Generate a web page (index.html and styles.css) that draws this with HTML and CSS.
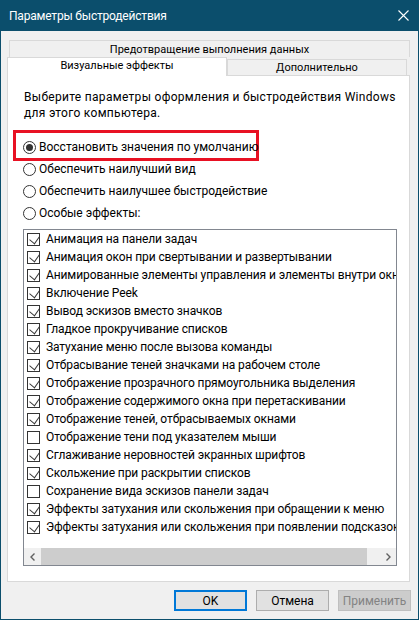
FILE: index.html
```
<!DOCTYPE html>
<html lang="ru">
<head>
  <meta charset="UTF-8">
  <title>Параметры быстродействия</title>
  <link rel="stylesheet" href="styles.css">
</head>
<body>

  <div class="window">
    <!-- Title bar -->
    <div class="titlebar">
      <span class="title">Параметры быстродействия</span>
      <svg class="close" width="11" height="11" viewBox="0 0 11 11">
        <path d="M0.5 0.5 L10.5 10.5 M10.5 0.5 L0.5 10.5" stroke="#fff" stroke-width="1.1" fill="none"/>
      </svg>
    </div>

    <div class="body">
      <!-- Tabs -->
      <div class="tab-row back">Предотвращение выполнения данных</div>
      <div class="tab-row front">
        <div class="tab active">Визуальные эффекты</div>
        <div class="tab">Дополнительно</div>
      </div>

      <div class="panel">
        <p class="intro">Выберите параметры оформления и быстродействия Windows<br>для этого компьютера.</p>

        <div class="radios">
          <div class="radio highlight"><span class="dot checked"></span>Восстановить значения по умолчанию</div>
          <div class="radio"><span class="dot"></span>Обеспечить наилучший вид</div>
          <div class="radio"><span class="dot"></span>Обеспечить наилучшее быстродействие</div>
          <div class="radio"><span class="dot"></span>Особые эффекты:</div>
        </div>

        <!-- Effects list -->
        <div class="listbox">
          <ul class="items">
            <li><span class="check on"></span>Анимация на панели задач</li>
            <li><span class="check on"></span>Анимация окон при свертывании и развертывании</li>
            <li><span class="check on"></span>Анимированные элементы управления и элементы внутри окна</li>
            <li><span class="check on"></span>Включение Peek</li>
            <li><span class="check on"></span>Вывод эскизов вместо значков</li>
            <li><span class="check on"></span>Гладкое прокручивание списков</li>
            <li><span class="check on"></span>Затухание меню после вызова команды</li>
            <li><span class="check on"></span>Отбрасывание теней значками на рабочем столе</li>
            <li><span class="check on"></span>Отображение прозрачного прямоугольника выделения</li>
            <li><span class="check on"></span>Отображение содержимого окна при перетаскивании</li>
            <li><span class="check on"></span>Отображение теней, отбрасываемых окнами</li>
            <li><span class="check"></span>Отображение тени под указателем мыши</li>
            <li><span class="check on"></span>Сглаживание неровностей экранных шрифтов</li>
            <li><span class="check on"></span>Скольжение при раскрытии списков</li>
            <li><span class="check"></span>Сохранение вида эскизов панели задач</li>
            <li><span class="check on"></span>Эффекты затухания или скольжения при обращении к меню</li>
            <li><span class="check on"></span>Эффекты затухания или скольжения при появлении подсказок</li>
          </ul>
          <div class="hscroll">
            <span class="arrow">
              <svg width="8" height="8" viewBox="0 0 8 8"><path d="M5.5 0.5 L2 4 L5.5 7.5" stroke="#606060" stroke-width="1.4" fill="none"/></svg>
            </span>
            <span class="thumb"></span>
            <span class="track"></span>
            <span class="arrow">
              <svg width="8" height="8" viewBox="0 0 8 8"><path d="M2.5 0.5 L6 4 L2.5 7.5" stroke="#606060" stroke-width="1.4" fill="none"/></svg>
            </span>
          </div>
        </div>
      </div>

      <!-- Dialog buttons -->
      <div class="buttons">
        <button class="btn default">OK</button>
        <button class="btn">Отмена</button>
        <button class="btn" disabled>Применить</button>
      </div>
    </div>
  </div>

</body>
</html>
```

FILE: styles.css
```
body {
  margin: 0;
  font-family: Roboto, "Noto Sans", sans-serif;
  font-size: 12px;
  color: #000;
}
.window {
  width: 419px;
  height: 620px;
  box-sizing: border-box;
  border: 1px solid #0b4e6c;
  border-top: 0;
  background: #f0f0f0;
}
.titlebar {
  height: 31px;
  background: #0b4e6c;
  color: #fff;
  display: flex;
  align-items: center;
  justify-content: space-between;
  padding: 0 9px 0 8px;
}
.title {
  letter-spacing: -0.2px;
}
.body {
  padding: 9px 8px 0 6px;
}
.tab-row.back {
  margin-left: 2px;
  height: 17px;
  box-sizing: border-box;
  border: 1px solid #d9d9d9;
  border-bottom: 0;
  text-align: center;
  line-height: 17px;
  font-size: 11px;
}
.tab-row.front {
  display: flex;
  align-items: flex-end;
  height: 18px;
  font-size: 11px;
}
.tab {
  box-sizing: border-box;
  border: 1px solid #d9d9d9;
  border-bottom: 0;
  text-align: center;
  width: 180px;
  height: 16px;
  line-height: 16px;
}
.tab.active {
  width: 220px;
  height: 19px;
  line-height: 16px;
  margin-bottom: -1px;
  background: #fff;
  position: relative;
  z-index: 1;
}
.panel {
  height: 507px;
  box-sizing: border-box;
  background: #fff;
  border: 1px solid #d9d9d9;
  padding: 13px 12px 0 16px;
}
.intro {
  margin: 0;
  line-height: 16px;
  letter-spacing: 0.3px;
  white-space: nowrap;
}
.radios {
  margin-top: 9px;
}
.radio {
  display: flex;
  align-items: center;
  height: 22px;
  margin-left: -1px;
  white-space: nowrap;
}
.radio.highlight {
  width: 246px;
  height: 31px;
  box-sizing: border-box;
  border: 3px solid #e81123;
  margin-left: -11px;
  margin-bottom: -3px;
  padding: 3px 0 0 7px;
}
.dot {
  width: 13px;
  height: 13px;
  box-sizing: border-box;
  border: 1px solid #333;
  border-radius: 50%;
  background: #fff;
  margin-right: 3px;
  display: flex;
  align-items: center;
  justify-content: center;
  flex: none;
}
.dot.checked::after {
  content: "";
  width: 7px;
  height: 7px;
  border-radius: 50%;
  background: #333;
}
.listbox {
  margin-top: 5px;
  margin-left: -1px;
  width: 374px;
  height: 337px;
  box-sizing: border-box;
  border: 1px solid #828790;
  display: flex;
  flex-direction: column;
  overflow: hidden;
}
.items {
  list-style: none;
  margin: 0;
  padding: 0;
  flex: 1;
  overflow: hidden;
}
.items li {
  height: 18px;
  display: flex;
  align-items: center;
  padding-left: 3px;
  white-space: nowrap;
  letter-spacing: -0.1px;
}
.check {
  width: 13px;
  height: 13px;
  box-sizing: border-box;
  border: 1px solid #333;
  margin-right: 6px;
  flex: none;
  position: relative;
}
.check.on::after {
  content: "";
  position: absolute;
  left: 3px;
  top: 0px;
  width: 6px;
  height: 8px;
  border-right: 1px solid #333;
  border-bottom: 1px solid #333;
  transform: rotate(40deg) skewX(5deg);
}
.hscroll {
  height: 17px;
  display: flex;
  background: #f0f0f0;
  flex: none;
}
.arrow {
  width: 17px;
  display: flex;
  align-items: center;
  justify-content: center;
}
.thumb {
  width: 326px;
  background: #cdcdcd;
}
.track {
  flex: 1;
}
.buttons {
  display: flex;
  justify-content: flex-end;
  gap: 9px;
  margin-top: 8px;
  margin-right: -1px;
}
.btn {
  width: 73px;
  height: 21px;
  box-sizing: border-box;
  border: 1px solid #adadad;
  background: #e1e1e1;
  font: inherit;
  color: #000;
  padding: 0;
}
.btn.default {
  border: 2px solid #0078d7;
}
.btn:disabled {
  background: #cccccc;
  border-color: #bfbfbf;
  color: #838383;
}
```
